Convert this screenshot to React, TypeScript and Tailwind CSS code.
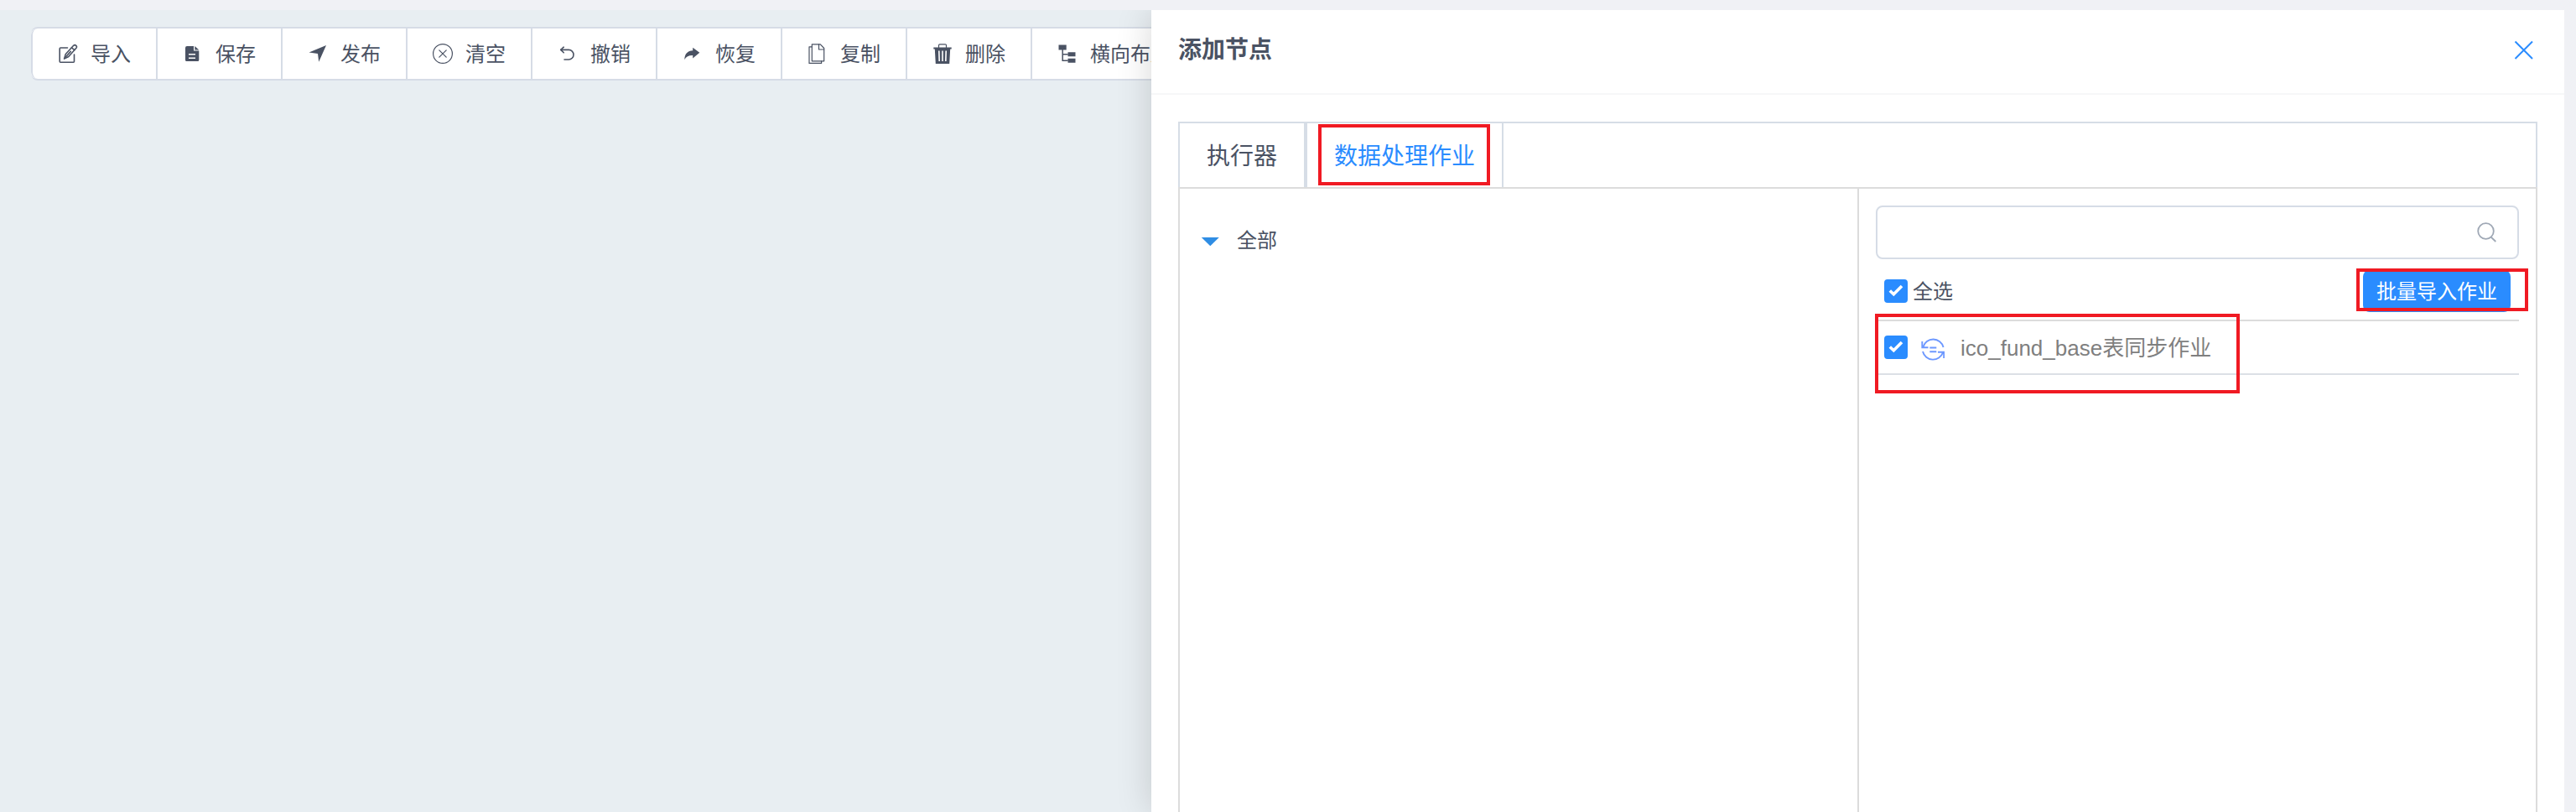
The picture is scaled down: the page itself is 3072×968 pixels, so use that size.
import { useState } from "react";
import type { ReactNode } from "react";

const line = {
  fill: "none",
  stroke: "currentColor",
  strokeLinecap: "round" as const,
  strokeLinejoin: "round" as const,
};

function Icon({ children, className = "size-6" }: { children: ReactNode; className?: string }) {
  return (
    <svg viewBox="0 0 24 24" className={`shrink-0 ${className}`} aria-hidden="true">
      {children}
    </svg>
  );
}

const ImportIcon = (
  <Icon>
    <g {...line} strokeWidth="1.6">
      <path d="M11.500 5H3.200a1 1 0 0 0-1 1v15.200a1 1 0 0 0 1 1h15.300a1 1 0 0 0 1-1V13" />
      <path d="M18.700 2.300a2.200 2.200 0 0 1 3.200 3L12.800 15.500l-5.200 2.600 1.700-5.600z" />
      <path d="M16.500 4.800l3.300 2.900M9.300 16l6-6.600" />
    </g>
  </Icon>
);

const SaveIcon = (
  <Icon>
    <path
      fill="currentColor"
      fillRule="evenodd"
      d="M5 3h8v5.500h6.300V19.500a1.500 1.500 0 0 1-1.500 1.500H4.500A1.500 1.500 0 0 1 3 19.500V5a2 2 0 0 1 2-2zM7 12v1.500h8V12zm0 4.500V18h8v-1.500z"
    />
    <path fill="currentColor" d="M14.300 3l5 4.500h-5z" />
  </Icon>
);

const PublishIcon = (
  <Icon>
    <path fill="currentColor" d="M22 2L13.200 21.700 12 12 1.500 10.500z" />
  </Icon>
);

const ClearIcon = (
  <Icon>
    <g {...line} strokeWidth="1.2">
      <circle cx="12" cy="12" r="11.400" />
      <path d="M7.800 7.800l8.400 8.400M16.200 7.800l-8.400 8.400" />
    </g>
  </Icon>
);

const UndoIcon = (
  <Icon>
    <g {...line} strokeWidth="1.600">
      <path d="M7.200 4.200L3.800 7.400l3.400 3.400" />
      <path d="M3.800 7.400h9.400a5.800 5.800 0 0 1 0 11.600H8" />
    </g>
  </Icon>
);

const RedoIcon = (
  <Icon>
    <path fill="currentColor" d="M20.300 10.800L12.200 4.700v3.600C6 8.700 2.500 12 2.300 19c2-3.500 5-5 9.900-4.900v3.400z" />
  </Icon>
);

const CopyIcon = (
  <Icon>
    <g {...line} strokeWidth="1.200">
      <path d="M5.300.8h10l4.400 4.700v15.300H5.300z" />
      <path d="M13.500 .8v6.200h6.200" />
      <path d="M5.300 3.800H2v19.600h14.600v-2.600" />
    </g>
  </Icon>
);

const DeleteIcon = (
  <Icon>
    <path {...line} strokeWidth="1.200" d="M7.500 4.800V2a1.200 1.200 0 0 1 1.200-1.200h6.600A1.200 1.200 0 0 1 16.500 2v2.800" />
    <path
      fill="currentColor"
      fillRule="evenodd"
      d="M1.300 4.500h21.400v2h-1.500L20.200 24H3.800l-1-17.500H1.300zM7 8.500l.4 12.500H9L8.600 8.500zm4.200 0V21h1.600V8.500zm4.200 0L15 21h1.600L17 8.500z"
    />
  </Icon>
);

const LayoutIcon = (
  <Icon>
    <path fill="currentColor" d="M1.500 1.500h9.200v6H1.500zM12.500 10.300h9v5h-9zM12.500 17.700h9v5h-9z" />
    <path fill="none" stroke="currentColor" strokeWidth="1.500" d="M6.200 6v14.200h6.500M6.200 12.800h6.500" />
  </Icon>
);

const tools = [
  { label: "导入", icon: ImportIcon },
  { label: "保存", icon: SaveIcon },
  { label: "发布", icon: PublishIcon },
  { label: "清空", icon: ClearIcon },
  { label: "撤销", icon: UndoIcon },
  { label: "恢复", icon: RedoIcon },
  { label: "复制", icon: CopyIcon },
  { label: "删除", icon: DeleteIcon },
  { label: "横向布局", icon: LayoutIcon },
];

function Toolbar() {
  return (
    <div className="flex px-[37px] py-5">
      <div className="flex h-16 overflow-hidden rounded-lg border-y-2 border-r-2 border-[#d6dce6] bg-white">
        {tools.map((tool, i) => (
          <button
            key={tool.label}
            type="button"
            className={`flex shrink-0 items-center gap-[15px] border-l-2 border-[#d6dce6] px-[30px] whitespace-nowrap ${
              i === 0 ? "rounded-l-lg" : ""
            }`}
          >
            {tool.icon}
            <span className="pt-0.5">{tool.label}</span>
          </button>
        ))}
      </div>
    </div>
  );
}

function Highlight({ className }: { className: string }) {
  return <span className={`pointer-events-none absolute border-4 border-[#f01a23] ${className}`} />;
}

function CheckBox({ id, checked, onChange }: { id: string; checked: boolean; onChange: (value: boolean) => void }) {
  return (
    <span className="grid size-7 shrink-0">
      <input
        id={id}
        type="checkbox"
        checked={checked}
        onChange={(e) => onChange(e.target.checked)}
        className="col-start-1 row-start-1 size-7 appearance-none rounded border-2 border-[#d6dce6] bg-white checked:border-[#2a8cff] checked:bg-[#2a8cff]"
      />
      {checked && (
        <svg viewBox="0 0 28 28" className="pointer-events-none col-start-1 row-start-1 size-7" aria-hidden="true">
          <path d="M6.800 13.500l4.500 4.300L21 8" fill="none" stroke="#fff" strokeWidth="3.600" />
        </svg>
      )}
    </span>
  );
}

function SyncIcon() {
  return (
    <svg viewBox="0 0 28 28" className="size-7 shrink-0" fill="none" stroke="#6d98ff" strokeWidth="1.900" aria-hidden="true">
      <path d="M1.300 4v7.200h7.200M2.400 10.800A12.500 12.500 0 0 1 26.600 11" />
      <path d="M27.200 24v-7.200H20M2 16A12.500 12.500 0 0 0 26 17.200" />
      <path d="M10.300 11.500h8M10.300 16.300h8" />
    </svg>
  );
}

function Drawer() {
  const [tab, setTab] = useState(1);
  const [checked, setChecked] = useState(true);
  const [keyword, setKeyword] = useState("");
  const tabColor = (i: number) => (tab === i ? "text-[#2a8cff]" : "");

  return (
    <aside className="absolute inset-y-0 right-0 flex w-[55.1%] flex-col bg-white shadow-[0_0_40px_rgba(0,0,0,0.16)]">
      <header className="flex h-[101px] items-center justify-between border-b-2 border-[#f6f7f8] px-8 pb-1">
        <h2 className="text-[28px] leading-10 font-bold">添加节点</h2>
        <button type="button" aria-label="关闭" className="flex h-10 items-center px-1">
          <svg viewBox="0 0 24 24" className="size-6" aria-hidden="true">
            <path d="M1.500 1.500l20.500 20.500M22 1.500L1.500 22" stroke="#2a8cff" strokeWidth="2" />
          </svg>
        </button>
      </header>

      <div className="flex flex-1 flex-col px-8 pt-8">
        <div role="tablist" className="flex h-[78px] border-x-2 border-t-2 border-[#d6dde6] text-[28px]">
          <button
            type="button"
            role="tab"
            aria-selected={tab === 0}
            onClick={() => setTab(0)}
            className={`border-r-2 border-[#d6dde6] px-8 pt-1 ${tabColor(0)}`}
          >
            执行器
          </button>
          <button
            type="button"
            role="tab"
            aria-selected={tab === 1}
            onClick={() => setTab(1)}
            className={`relative border-x-2 border-[#d6dde6] px-8 pt-1 ${tabColor(1)}`}
          >
            数据处理作业
            <Highlight className="top-px right-3.5 bottom-0.5 left-[13px]" />
          </button>
        </div>

        <div className="grid flex-1 grid-cols-[808fr_809fr] border-x-2 border-t-2 border-[#dcdcdc]">
          <div className="px-6 py-[38px]">
            <button type="button" className="flex h-12 items-center gap-5">
              <Icon>
                <path fill="#2f8de4" d="M1.800 8h21L12.300 18.300z" />
              </Icon>
              全部
            </button>
          </div>

          <div className="border-l-2 border-[#dcdcdc] p-5">
            <div className="flex h-16 items-center rounded-lg border-2 border-[#d6dce6] pr-6 pl-6">
              <input
                type="text"
                aria-label="搜索"
                value={keyword}
                onChange={(e) => setKeyword(e.target.value)}
                className="h-full min-w-0 flex-1 bg-transparent outline-none"
              />
              <Icon>
                <g fill="none" stroke="#9fa8b5" strokeWidth="1.800">
                  <circle cx="10.500" cy="10.500" r="9.300" />
                  <path d="M16.500 17.500l5.800 5.500" />
                </g>
              </Icon>
            </div>

            <div className="relative flex h-[74px] items-center justify-between border-b-2 border-[#dcdcdc] px-2.5 pt-1">
              <label htmlFor="select-all" className="flex items-center gap-1.5">
                <CheckBox id="select-all" checked={checked} onChange={setChecked} />
                <span className="pt-0.5">全选</span>
              </label>
              <button type="button" className="h-[50px] rounded-lg bg-[#2a8cff] px-4 pt-0.5 text-white">
                批量导入作业
              </button>
              <Highlight className="top-[11px] right-[-11px] h-[51px] w-[205px]" />
            </div>

            <div className="relative flex h-16 items-center border-b-2 border-[#dce0e6] pl-2.5">
              <label htmlFor="job" className="flex items-center text-[26px] text-[#7f7f7f]">
                <CheckBox id="job" checked={checked} onChange={setChecked} />
                <span className="pt-1.5 pr-[19px] pl-4">
                  <SyncIcon />
                </span>
                <span className="pt-0.5">ico_fund_base表同步作业</span>
              </label>
              <Highlight className="top-[-9px] left-[-1px] h-[95px] w-[435px]" />
            </div>
          </div>
        </div>
      </div>
    </aside>
  );
}

export default function App() {
  return (
    <div className="flex min-h-screen bg-[#f0f1f5] pt-3 pr-3.5 font-['Liberation_Sans','Noto_Sans_CJK_SC',sans-serif] text-2xl text-[#4a5263]">
      <main className="relative min-w-0 flex-1 overflow-hidden bg-[#e8eef2]">
        <Toolbar />
        <Drawer />
      </main>
    </div>
  );
}
